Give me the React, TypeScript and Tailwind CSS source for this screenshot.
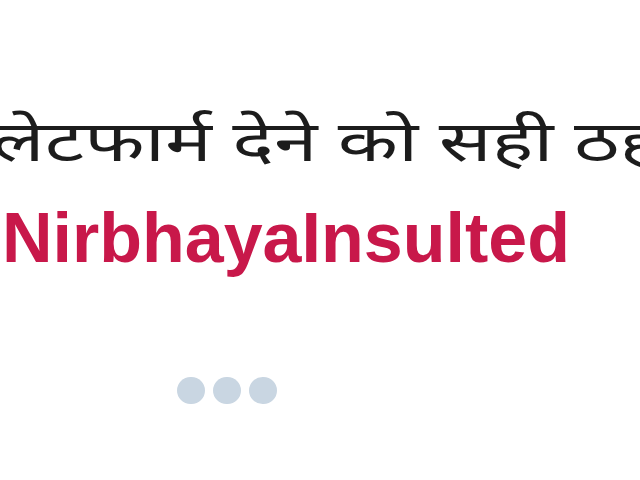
export default function App() {
  return (
    <div className="h-[480px] w-[640px] overflow-hidden bg-white">
      <div className="pt-[99px]">
        <p
          className="ml-[-34px] origin-left scale-x-[1.4] whitespace-nowrap text-[56px] leading-[80px] text-[#1c1c1c]"
          style={{ fontFamily: '"Noto Sans", "Noto Sans Devanagari", sans-serif' }}
        >
          प्लेटफार्म देने को सही ठहराया
        </p>
        <p className="ml-[2px] mt-[24px] whitespace-nowrap font-['Liberation_Sans',Arial,sans-serif] text-[70px] font-bold leading-[70px] text-[#c8184a]">
          NirbhayaInsulted
        </p>
      </div>
      <div className="mt-[104px] flex gap-[8px] pl-[177px]">
        <span className="h-[27px] w-[28px] rounded-full bg-[#c9d6e2]" />
        <span className="h-[27px] w-[28px] rounded-full bg-[#c9d6e2]" />
        <span className="h-[27px] w-[28px] rounded-full bg-[#c9d6e2]" />
      </div>
    </div>
  );
}
